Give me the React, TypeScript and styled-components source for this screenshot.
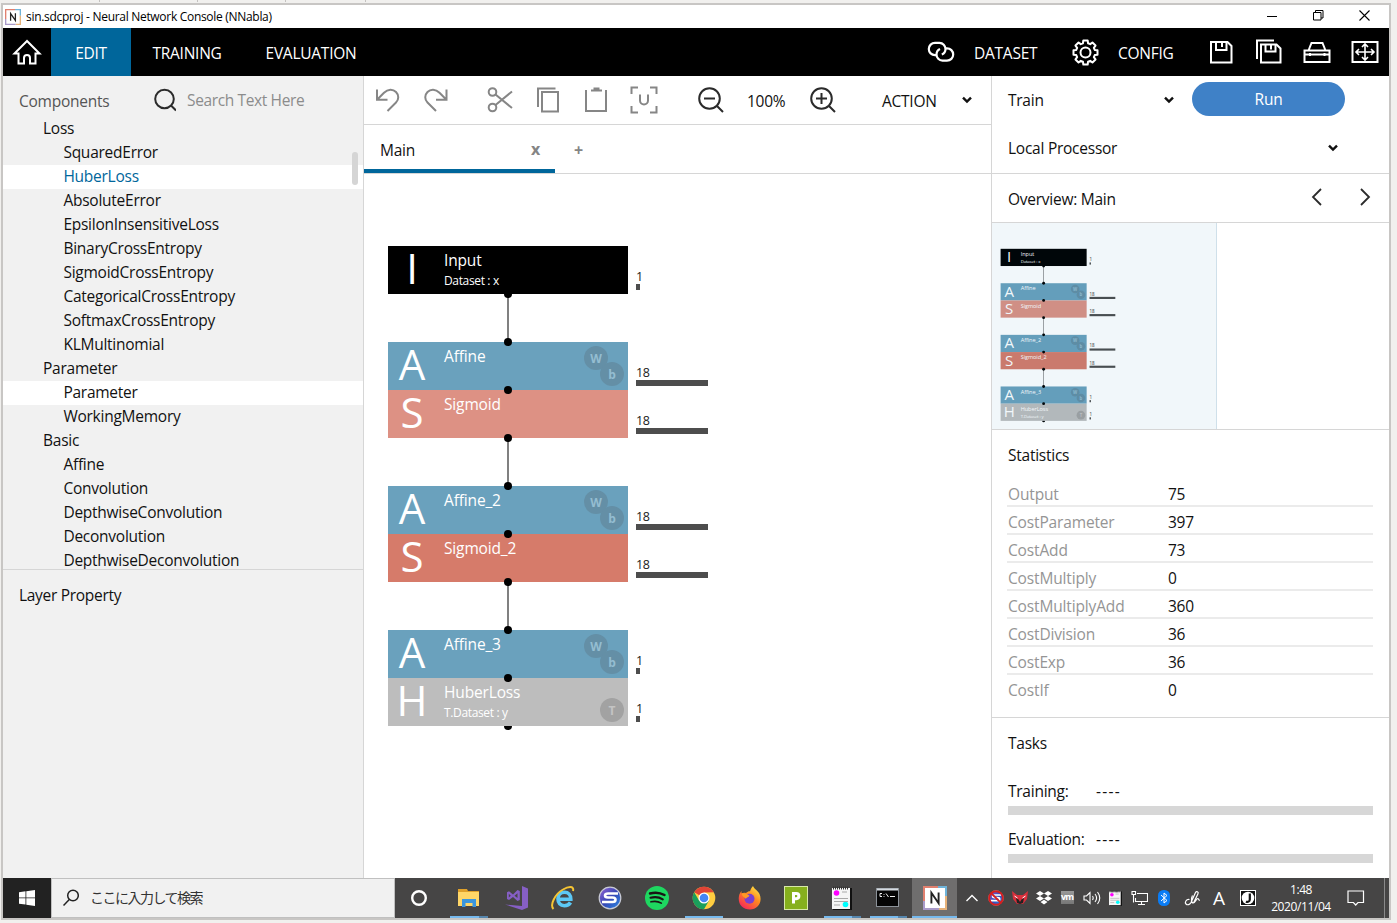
import React from 'react';
import styled, { createGlobalStyle, css } from 'styled-components';

const GlobalStyle = createGlobalStyle`
  * { box-sizing: border-box; }
  html, body { margin: 0; padding: 0; }
  body {
    width: 1397px; height: 923px; overflow: hidden; background: #f1f0ee;
    font-family: "Open Sans", "Noto Sans", "Noto Sans CJK JP", sans-serif;
    font-size: 15.5px; letter-spacing: -0.25px; color: #111;
  }
  svg { display: block; flex: none; }
`;

const line = '#d6d6d6';
const accent = '#00669b';

/* ---------- window frame ---------- */
const Desktop = styled.div`
  width: 1397px; height: 923px; display: flex; flex-direction: column; padding-left: 1px;
`;
const BackStrip = styled.div`
  height: 3px; display: flex; padding-left: 98px; gap: 97px;
`;
const BackTick = styled.span<{ $gap?: number }>`
  width: 1px; height: 2px; background: #c4c2c0; margin-right: ${p => p.$gap ?? 0}px;
`;
const Window = styled.div`
  width: 1390px; height: 917px; border: 2px solid #c8c6c4; background: #fff;
  display: flex; flex-direction: column; overflow: hidden;
`;
const TitleBar = styled.div`
  height: 23px; flex: none; display: flex; align-items: center; padding: 0 19px 0 2px;
  font-size: 12px; letter-spacing: -0.3px; color: #000;
`;
const AppTitle = styled.span` flex: 1; padding-left: 5px; `;
const WinButtons = styled.div` display: flex; gap: 35px; align-items: center; margin-top: -3px; `;

/* ---------- navigation ---------- */
const Nav = styled.nav`
  height: 48px; flex: none; background: #000; color: #fff; display: flex; align-items: center;
  padding-right: 10px;
`;
const HomeButton = styled.div` width: 48px; padding: 0 0 1px 9px; `;
const NavTab = styled.div<{ $w: number; $active?: boolean }>`
  width: ${p => p.$w}px; height: 48px; display: flex; align-items: center; justify-content: center;
  padding-top: 2px; background: ${p => (p.$active ? accent : 'transparent')};
`;
const NavSpacer = styled.div` flex: 1; `;
const NavLabel = styled.span<{ $w: number }>` width: ${p => p.$w}px; padding: 2px 0 0 19px; `;
const NavIcons = styled.div` display: flex; align-items: center; gap: 20px; padding-bottom: 1px; `;

/* ---------- body ---------- */
const Body = styled.div` height: 802px; flex: none; display: flex; `;
const Left = styled.aside`
  width: 361px; background: #f1f1f1; border-right: 1px solid ${line};
  display: flex; flex-direction: column;
`;
const LeftHead = styled.div`
  height: 41px; flex: none; display: flex; align-items: center; padding: 7px 0 0 16px; color: #555;
`;
const HeadTitle = styled.span` width: 135px; padding-top: 2px; `;
const Placeholder = styled.span` padding-left: 11px; color: #8c8c8c; letter-spacing: -0.37px; `;
const ListArea = styled.div`
  height: 453px; flex: none; overflow: hidden; border-bottom: 1px solid ${line}; position: relative;
`;
const Item = styled.div<{ $group?: boolean; $lit?: boolean; $selected?: boolean }>`
  height: 24px; line-height: 22px; padding-left: ${p => (p.$group ? 40 : 60.4)}px;
  background: ${p => (p.$lit ? '#fff' : 'transparent')};
  color: ${p => (p.$selected ? accent : '#111')};
`;
const ScrollThumb = styled.div`
  position: absolute; right: 5px; top: 35px; width: 6px; height: 33px; border-radius: 3px; background: #d5d5d5;
`;
const PropertyHead = styled.div` padding: 14px 16px; line-height: 22px; letter-spacing: -0.3px; `;

const Center = styled.main` width: 627px; display: flex; flex-direction: column; `;
const Toolbar = styled.div`
  height: 49px; flex: none; border-bottom: 1px solid ${line}; display: flex; align-items: center;
  padding-left: 11px;
`;
const Slot = styled.div<{ $w: number; $top?: number }>`
  width: ${p => p.$w}px; flex: none; padding-top: ${p => p.$top ?? 0}px;
`;
const Tabs = styled.div`
  height: 49px; flex: none; border-bottom: 1px solid ${line}; display: flex; align-items: center;
`;
const Tab = styled.div`
  width: 191px; height: 48px; border-bottom: 4px solid ${accent};
  display: flex; align-items: center; justify-content: space-between; padding: 5px 15px 0 16px;
`;
const TabMark = styled.span` font-weight: 700; font-size: 16px; color: #858585; line-height: 20px; margin-top: -2px; `;
const AddTab = styled.span` font-weight: 700; font-size: 16px; color: #858585; padding: 1px 0 0 19px; `;

const Right = styled.aside`
  width: 398px; border-left: 1px solid ${line}; display: flex; flex-direction: column;
`;
const RunRow = styled.div` height: 48px; flex: none; display: flex; align-items: center; padding-left: 16px; `;
const SelectText = styled.span<{ $w: number }>` width: ${p => p.$w}px; `;
const RunButton = styled.div`
  width: 153px; height: 34px; border-radius: 17px; background: #3f81c7; color: #fff; margin: -2px 0 0 17px;
  display: flex; align-items: center; justify-content: center;
`;
const ProcRow = styled.div`
  height: 50px; flex: none; display: flex; align-items: center; padding: 0 0 1px 16px;
  border-bottom: 1px solid ${line};
`;
const OverHead = styled.div`
  height: 49px; flex: none; display: flex; align-items: center; padding: 2px 18px 0 16px;
  border-bottom: 1px solid ${line};
`;
const Arrows = styled.div` display: flex; gap: 38px; margin-left: auto; padding-bottom: 4px; `;
const OverArea = styled.div` height: 207px; flex: none; border-bottom: 1px solid ${line}; `;
const Viewport = styled.div`
  width: 225px; height: 206px; overflow: hidden; position: relative; border-right: 1px solid #cfe0ea;
  &::after { content: ''; position: absolute; inset: 0; background: rgba(0, 102, 155, 0.055); }
`;
const MiniScale = styled.div` width: 627px; height: 576px; transform: scale(0.3585); transform-origin: 0 0; `;
const Section = styled.section<{ $h: number; $rule?: boolean }>`
  height: ${p => p.$h}px; flex: none; padding: 13px 16px 0;
  ${p => p.$rule && css`border-bottom: 1px solid ${line};`}
`;
const SectionTitle = styled.div<{ $gap: number }>` line-height: 24px; margin-bottom: ${p => p.$gap}px; `;
const StatRow = styled.div`
  height: 28px; display: flex; line-height: 28px; padding-top: 1px; border-bottom: 2px solid #ebebeb;
  margin-left: -1px; padding-left: 1px;
  &:last-child { border-bottom: 0; }
`;
const StatName = styled.span` width: 160px; color: #959595; letter-spacing: -0.15px; `;
const Task = styled.div` height: 48px; line-height: 24px; `;
const TaskLine = styled.div` display: flex; height: 27px; `;
const TaskName = styled.span` width: 88px; `;
const Dashes = styled.span` letter-spacing: 1.3px; `;
const Progress = styled.div` height: 9px; background: #d7d7d7; `;

/* ---------- network graph ---------- */
const Canvas = styled.div` position: relative; height: 704px; color: #fff; `;
const Block = styled.div<{ $y: number; $color: string }>`
  position: absolute; left: 24px; top: ${p => p.$y}px; width: 240px; height: 48px;
  background: ${p => p.$color}; display: flex;
`;
const Initial = styled.div`
  width: 48px; text-align: center; font-size: 42px; line-height: 44px; letter-spacing: 0;
`;
const BlockText = styled.div` padding: 2px 0 0 8px; line-height: 24px; letter-spacing: -0.15px; `;
const BlockNote = styled.div` font-size: 12px; line-height: 18px; letter-spacing: -0.35px; `;
const Pin = styled.div<{ $x: number; $y: number; $grey?: boolean }>`
  position: absolute; left: ${p => p.$x}px; top: ${p => p.$y}px; width: 24px; height: 24px; border-radius: 50%;
  background: ${p => (p.$grey ? '#a2a2a2' : '#648fa6')}; color: ${p => (p.$grey ? '#c4c4c4' : '#94bdd1')};
  font-size: 12px; font-weight: 700; letter-spacing: 0; text-align: center; line-height: 25px;
`;
const Wire = styled.div<{ $y: number }>`
  position: absolute; left: 143px; top: ${p => p.$y}px; width: 2px; height: 48px; background: #808080;
`;
const Dot = styled.div<{ $y: number }>`
  position: absolute; left: 140px; top: ${p => p.$y - 4}px; width: 8px; height: 8px; border-radius: 50%; background: #000;
`;
const Size = styled.div<{ $y: number }>`
  position: absolute; left: 272px; top: ${p => p.$y + 22}px; color: #1a1a1a;
  font-size: 12.5px; letter-spacing: -0.4px;
`;
const SizeText = styled.div` height: 16px; line-height: 18px; `;
const SizeBar = styled.div<{ $w: number }>` width: ${p => p.$w}px; height: 6px; background: #4d4d4d; `;

type Layer = { y: number; c: string; ch: string; name: string; note?: string; n: number; pins?: 'wb' | 't' };
const blue = '#6aa1bd';
const layers: Layer[] = [
  { y: 72, c: '#000', ch: 'I', name: 'Input', note: 'Dataset : x', n: 1 },
  { y: 168, c: blue, ch: 'A', name: 'Affine', n: 18, pins: 'wb' },
  { y: 216, c: '#dd9184', ch: 'S', name: 'Sigmoid', n: 18 },
  { y: 312, c: blue, ch: 'A', name: 'Affine_2', n: 18, pins: 'wb' },
  { y: 360, c: '#d67b6a', ch: 'S', name: 'Sigmoid_2', n: 18 },
  { y: 456, c: blue, ch: 'A', name: 'Affine_3', n: 1, pins: 'wb' },
  { y: 504, c: '#bdbdbd', ch: 'H', name: 'HuberLoss', note: 'T.Dataset : y', n: 1, pins: 't' },
];

const Graph = () => (
  <Canvas>
    {[120, 264, 408].map(y => <Wire key={y} $y={y} />)}
    <Dot $y={552} />
    {layers.map(l => (
      <React.Fragment key={l.name}>
        <Block $y={l.y} $color={l.c}>
          <Initial>{l.ch}</Initial>
          <BlockText>
            {l.name}
            {l.note && <BlockNote>{l.note}</BlockNote>}
          </BlockText>
          {l.pins === 'wb' && <><Pin $x={196} $y={4}>W</Pin><Pin $x={212} $y={20}>b</Pin></>}
          {l.pins === 't' && <Pin $x={212} $y={20} $grey>T</Pin>}
        </Block>
        <Size $y={l.y}><SizeText>{l.n}</SizeText><SizeBar $w={l.n * 4} /></Size>
      </React.Fragment>
    ))}
    {[120, 168, 216, 264, 312, 360, 408, 456, 504].map(y => <Dot key={y} $y={y} />)}
  </Canvas>
);

/* ---------- icons ---------- */
const Svg = ({ w, h, s = 'currentColor', sw = 2, children }: { w: number; h: number; s?: string; sw?: number; children: React.ReactNode }) => (
  <svg width={w} height={h} viewBox={`0 0 ${w} ${h}`} fill="none" stroke={s} strokeWidth={sw}>{children}</svg>
);
const gearPath = (() => {
  const pts: string[] = [];
  for (let i = 0; i < 8; i++) {
    const a = (i * Math.PI) / 4;
    [[-0.27, 9.6], [-0.18, 12.2], [0.18, 12.2], [0.27, 9.6]].forEach(([d, r]) => {
      pts.push(`${(13.5 + r * Math.sin(a + d)).toFixed(2)} ${(13.5 - r * Math.cos(a + d)).toFixed(2)}`);
    });
  }
  return `M${pts.join('L')}Z`;
})();
const Caret = () => <Svg w={12} h={8} s="#111" sw={2.4}><path d="M2 1.6l4 4 4-4" /></Svg>;
const grey = '#868686';
const dark = '#2b2b2b';

const NLogo = ({ size }: { size: number }) => (
  <svg width={size} height={size} viewBox="0 0 24 24">
    <rect width="24" height="24" fill="#fff" />
    <path d="M1 15V1H15" fill="none" stroke="#e0806f" strokeWidth="2" />
    <path d="M15 1H23V10" fill="none" stroke="#6fb3d8" strokeWidth="2" />
    <path d="M23 10V23H16" fill="none" stroke="#e6b27a" strokeWidth="2" />
    <path d="M16 23H1V15" fill="none" stroke="#a99ac9" strokeWidth="2" />
    <path d="M8.4 17.5V6.8L15.6 17.2V6.5" fill="none" stroke="#222" strokeWidth="1.9" />
  </svg>
);

/* ---------- taskbar ---------- */
const Taskbar = styled.footer` height: 40px; flex: none; background: #464545; display: flex; color: #fff; `;
const Start = styled.div` width: 48px; background: #222; display: flex; align-items: center; justify-content: center; `;
const SearchBox = styled.div`
  width: 344px; background: #f1f1f1; border: 1px solid #c0c0c0; display: flex; align-items: center;
  padding: 0 0 0 11px; gap: 11px; color: #333; font: 14px "Noto Sans CJK JP", sans-serif; letter-spacing: 0;
`;
const SearchText = styled.span` letter-spacing: -1.5px; margin-top: -2px; `;
const TaskSlot = styled.div<{ $w: number; $on?: boolean; $line?: number; $split?: boolean; $pad?: number }>`
  width: ${p => p.$w}px; flex: none; display: flex; align-items: center; justify-content: center; position: relative;
  padding-right: ${p => p.$pad ?? 0}px;
  background: ${p => (p.$on ? '#6f6e6e' : 'transparent')};
  ${p => p.$line && css`
    &::after {
      content: ''; position: absolute; bottom: 0; left: calc(50% - ${p.$line / 2}px); width: ${p.$line}px; height: 2px;
      background: ${p.$split ? 'linear-gradient(90deg, #76b9ed 0 77%, #5686ad 77%)' : '#76b9ed'};
    }`}
`;
const Tray = styled.div` display: flex; margin-left: 3px; flex: 1; `;
const Clock = styled.div`
  width: 70px; font-size: 12px; line-height: 17px; padding-top: 3px; text-align: center; letter-spacing: -0.4px;
`;
const ShowDesktop = styled.div` width: 5px; margin-left: auto; border-left: 1px solid #8a8a8a; `;

const Explorer = () => (
  <svg width="24" height="24" viewBox="0 0 24 24">
    <path d="M1 3h9l1 2h11v15H1z" fill="#e0a12a" /><path d="M1 6h21v14H1z" fill="#ffd667" />
    <path d="M5 20v-7h14v8h-3.5v-4h-7v4H5z" fill="#3b96dc" />
  </svg>
);
const VisualStudio = () => (
  <svg width="26" height="26" viewBox="0 0 26 26">
    <path d="M18 1l6 2.4v19L18 25 1 19.5l17 1.5z" fill="#865fc5" />
    <path d="M3 7.2l2-1 4 3.3 4.5-4.5 2.3 1v9l-2.3 1L9 12l-4 3-2-1zM4.8 8.8v3.8l2-1.9zM10.5 10.7l3 2.4V8.3z" fill="#865fc5" fillRule="evenodd" />
  </svg>
);
const InternetExplorer = () => (
  <svg width="24" height="24" viewBox="0 0 24 24" fill="none">
    <path d="M19.500 16.500c-1.300 2.300-3.500 3.200-6.200 3.200-4 0-6.300-2.700-6.300-6.600 0-4 2.600-6.800 6.500-6.800s6.300 2.700 6.300 6.900H8.500" stroke="#5cc8f5" strokeWidth="3.600" />
    <path d="M2.500 23C-1.500 19 4 8 12 3.500 17 .5 23.500-.5 22 5" stroke="#f5c433" strokeWidth="2" />
  </svg>
);
const SIcon = ({ size, no }: { size: number; no?: boolean }) => (
  <svg width={size} height={size} viewBox="0 0 24 24" fill="none">
    <defs><linearGradient id="orb" x1="0" y1="0" x2="1" y2="1"><stop offset="0" stopColor="#9a66d6" /><stop offset=".5" stopColor="#3646b4" /><stop offset="1" stopColor="#2b8ee8" /></linearGradient></defs>
    <circle cx="12" cy="12" r="10.800" fill="url(#orb)" stroke="#c9cbd6" strokeWidth="1.200" />
    <path d="M20 7.500H10c-4 0-4 4 0 4h4.500c4 0 4 4.500 0 4.500H4" stroke="#fff" strokeWidth="2.600" />
    {no && <><circle cx="12" cy="12" r="10.300" stroke="#d81e1e" strokeWidth="3" /><path d="M5 5l14 14" stroke="#d81e1e" strokeWidth="3" /></>}
  </svg>
);
const Spotify = () => (
  <svg width="24" height="24" viewBox="0 0 24 24" fill="none" stroke="#191414" strokeLinecap="round">
    <circle cx="12" cy="12" r="12" fill="#1ed760" stroke="none" />
    <path d="M5 7.500c5-1.500 10-1 14.500 1.500" strokeWidth="2.500" /><path d="M5.500 11.800c4.500-1.300 8.500-.8 12.300 1.500" strokeWidth="2.100" /><path d="M6 15.800c3.800-1 7.200-.6 10.300 1.300" strokeWidth="1.700" />
  </svg>
);
const Chrome = () => (
  <svg width="24" height="24" viewBox="0 0 24 24">
    <circle cx="12" cy="12" r="11.300" fill="#ffcd40" />
    <path d="M12 12L2.200 6.350A11.300 11.300 0 0 1 21.800 6.350L12 6.500z" fill="#e04436" />
    <path d="M2.200 6.350A11.300 11.300 0 0 0 12 23.300L16.900 14.800 12 12 7 14.600z" fill="#1a9f5c" />
    <circle cx="12" cy="12" r="5.500" fill="#fff" /><circle cx="12" cy="12" r="4.300" fill="#4486f4" />
  </svg>
);
const Firefox = () => (
  <svg width="24" height="24" viewBox="0 0 24 24">
    <defs><linearGradient id="fx" x1=".9" y1="0" x2=".2" y2="1"><stop offset="0" stopColor="#fff04a" /><stop offset=".45" stopColor="#ff8a1f" /><stop offset="1" stopColor="#f5215e" /></linearGradient></defs>
    <path d="M15 0c1 3 5 4.500 6.500 8 3.500 8-2 15.500-9.500 15.500S-.5 18 1 10c.3-2 1.500-4 2.500-5v2.500C5 6.500 6.500 6.500 8 7c1.500-1.500 3-2 4-1.800C12.500 3.500 13.500 1.500 15 0z" fill="url(#fx)" />
    <circle cx="11.500" cy="12.800" r="5" fill="#7a3fd0" />
    <path d="M3.500 7.500c3-.5 5 0 8 2.200-1 1.800-3 1.500-3.800 3C6 11 4 10 3.500 7.500z" fill="#ff9a24" />
  </svg>
);
const PIcon = () => (
  <svg width="24" height="24" viewBox="0 0 24 24">
    <rect width="24" height="24" fill="#d8e8a8" /><rect x="1" y="1" width="22" height="22" fill="#86b01d" />
    <path d="M9.500 17.500V7.500h2.800a2.600 2.600 0 0 1 0 5.200H9.500" fill="none" stroke="#fff" strokeWidth="3" />
  </svg>
);
const Note = ({ w, h }: { w: number; h: number }) => (
  <svg width={w} height={h} viewBox="0 0 20 24">
    <rect x="1" y="2" width="19" height="22" fill="#111" /><rect x="0" y="2" width="18" height="21" fill="#f5f5f5" />
    <path d="M1 2h16" stroke="#333" strokeWidth="3" strokeDasharray="1 1" />
    <circle cx="4.500" cy="7" r="2.800" fill="#f0f" /><circle cx="13.500" cy="18.500" r="2.800" fill="#0ff" />
    <path d="M2 12.500h14M2 15.500h14M2 19h6M10 6h5" stroke="#a9a9a9" />
  </svg>
);
const Cmd = () => (
  <svg width="24" height="22" viewBox="0 0 24 22">
    <rect x=".5" y="1.500" width="22" height="18" fill="#050505" stroke="#8c9299" /><path d="M1 2.500h21" stroke="#d5dae0" strokeWidth="2" />
    <path d="M6 6.500H4v3h2M8 7v.8M8 9v.8M10 6.500l2.500 3.500M14 9.500h5" stroke="#eee" fill="none" />
  </svg>
);
const Fox = () => (
  <svg width="16" height="14" viewBox="0 0 16 14">
    <path d="M0 0l5 4h6l5-4-1 8-4 5H5L1 8z" fill="#d8303c" /><path d="M4 7l2.500 1.500L8 11l1.500-2.500L12 7l-1 5-3 1-3-1z" fill="#222" /><path d="M2.500 5l3 2M13.500 5l-3 2" stroke="#fff" />
  </svg>
);
const Dropbox = () => (
  <svg width="16" height="14" viewBox="0 0 16 14" fill="#fff">
    <path d="M4 0l4 2.500L4 5 0 2.500zM12 0l4 2.500L12 5 8 2.500zM4 5l4 2.500L4 10 0 7.500zM12 5l4 2.500-4 2.500-4-2.500zM4.500 11L8 8.700l3.500 2.300L8 13.500z" />
  </svg>
);
const VmBox = styled.div`
  width: 13px; height: 13px; background: linear-gradient(#999, #777); color: #fff; font-size: 9px; line-height: 11px;
  font-weight: 700; letter-spacing: -1px; text-align: center; margin-top: -2px;
`;
const TrayLetter = styled.span` font-size: 19px; letter-spacing: 0; `;

const items: [string, boolean?][] = [
  ['Loss', true], ['SquaredError'], ['HuberLoss'], ['AbsoluteError'], ['EpsilonInsensitiveLoss'],
  ['BinaryCrossEntropy'], ['SigmoidCrossEntropy'], ['CategoricalCrossEntropy'], ['SoftmaxCrossEntropy'],
  ['KLMultinomial'], ['Parameter', true], ['Parameter'], ['WorkingMemory'], ['Basic', true], ['Affine'],
  ['Convolution'], ['DepthwiseConvolution'], ['Deconvolution'], ['DepthwiseDeconvolution'],
];
const stats: [string, number][] = [
  ['Output', 75], ['CostParameter', 397], ['CostAdd', 73], ['CostMultiply', 0],
  ['CostMultiplyAdd', 360], ['CostDivision', 36], ['CostExp', 36], ['CostIf', 0],
];

export default function App() {
  return (
    <Desktop>
      <GlobalStyle />
      <BackStrip><BackTick /><BackTick $gap={-10} /><BackTick $gap={-18} /><BackTick /></BackStrip>
      <Window>
        <TitleBar>
          <NLogo size={16} />
          <AppTitle>sin.sdcproj - Neural Network Console (NNabla)</AppTitle>
          <WinButtons>
            <Svg w={11} h={11} s="#000" sw={1}><path d="M0 6.500h10" /></Svg>
            <Svg w={11} h={11} s="#000" sw={1}><path d="M.5 2.500h7.500v7.500H.5zM2.500 2.500V.5h7.500V8H8" /></Svg>
            <Svg w={11} h={11} s="#000" sw={1.1}><path d="M.5.5l10 10M10.500.5l-10 10" /></Svg>
          </WinButtons>
        </TitleBar>

        <Nav>
          <HomeButton>
            <Svg w={30} h={26}><path d="M15 2L2.500 14.500h4V24.500h5.500V19a3 3 0 0 1 6 0v5.500h5.500v-10h4z" /></Svg>
          </HomeButton>
          <NavTab $w={80} $active>EDIT</NavTab>
          <NavTab $w={112}>TRAINING</NavTab>
          <NavTab $w={136}>EVALUATION</NavTab>
          <NavSpacer />
          <Svg w={28} h={22} sw={2.2}>
            <path d="M9.500 14.200H8A6.200 6.200 0 0 1 8 1.800h4.500A6.200 6.200 0 0 1 18.500 8c0 2.600-1.400 4.600-3.700 5.600" />
            <path d="M19 7.300h1a6.200 6.200 0 0 1 0 12.400h-4.500A6.200 6.200 0 0 1 9.500 13.500c0-2.600 1.200-4.600 3.500-5.600" />
          </Svg>
          <NavLabel $w={117}>DATASET</NavLabel>
          <Svg w={27} h={27}><path d={gearPath} strokeLinejoin="round" /><circle cx="13.500" cy="13.500" r="5" /></Svg>
          <NavLabel $w={108}>CONFIG</NavLabel>
          <NavIcons>
            <Svg w={28} h={26}><path d="M4 3h16.500l4 4v16.500H4z" /><path d="M9 3v8h10.500V3M15 3v5" /></Svg>
            <Svg w={28} h={26}><path d="M2 20V1.500h17" /><path d="M6 5.500h15.500l4 4v14H6z" /><path d="M10.500 5.500v7h10V6M16 6v4.500" /></Svg>
            <Svg w={28} h={26}><path d="M1.500 11.500h25v11.500h-25zM5.500 11.500l3-7.500h11l3 7.500M1.500 15.500h25M7 14v3M21.500 14v3" /></Svg>
            <Svg w={28} h={26}><path d="M1.500 3h25v20h-25z" /><path d="M14 5.500v15M5 13h18M11 8l3-3 3 3M11 18l3 3 3-3M8 10l-3 3 3 3M20 10l3 3-3 3" strokeWidth={1.6} /></Svg>
          </NavIcons>
        </Nav>

        <Body>
          <Left>
            <LeftHead>
              <HeadTitle>Components</HeadTitle>
              <Svg w={22} h={24} s={dark} sw={2}><circle cx="10.500" cy="11" r="9.300" /><path d="M17 17.500l5 5" /></Svg>
              <Placeholder>Search Text Here</Placeholder>
            </LeftHead>
            <ListArea>
              {items.map(([t, g], i) => (
                <Item key={i} $group={g} $lit={i === 2 || i === 11} $selected={i === 2}>{t}</Item>
              ))}
              <ScrollThumb />
            </ListArea>
            <PropertyHead>Layer Property</PropertyHead>
          </Left>

          <Center>
            <Toolbar>
              <Slot $w={48}><Svg w={26} h={26} s={grey}><path d="M2 2.500v10.300h10.500M2.300 12.500L9 5.800c4-4 9-3.800 12-.8s3 7.500 0 10.500l-8.500 8.500" /></Svg></Slot>
              <Slot $w={64}><Svg w={26} h={26} s={grey}><path d="M23.500 2.500v10.300H13M23.200 12.500L16.500 5.800c-4-4-9-3.800-12-.8s-3 7.500 0 10.500L13 24" /></Svg></Slot>
              <Slot $w={49}><Svg w={26} h={26} s={grey}><circle cx="5.500" cy="5" r="3.800" /><circle cx="5.500" cy="20.500" r="3.800" /><path d="M8.500 7.500L25 21M8.500 18L25 4.500" /></Svg></Slot>
              <Slot $w={47}><Svg w={26} h={26} s={grey}><path d="M2 20V1.500h17.500M6 5h16v19.500H6z" /></Svg></Slot>
              <Slot $w={47}><Svg w={26} h={26} s={grey}><path d="M3 3v21h20V3M8 3.500h11M10.500 1.500h6" /></Svg></Slot>
              <Slot $w={68}><Svg w={28} h={28} s={grey}><path d="M1.500 8V1.500H8M20 1.500h6.500V8M26.500 20v6.500H20M8 26.500H1.500V20M10 8.500v6a4 4 0 0 0 8 0v-6" /></Svg></Slot>
              <Slot $w={49}><Svg w={28} h={26} s={dark}><circle cx="11.500" cy="11.500" r="10.300" /><path d="M19 19l6 6M6 11.500h11" /></Svg></Slot>
              <Slot $w={63} $top={2}>100%</Slot>
              <Slot $w={72}><Svg w={28} h={26} s={dark}><circle cx="11.500" cy="11.500" r="10.300" /><path d="M19 19l6 6M6 11.500h11M11.500 6v11" /></Svg></Slot>
              <Slot $w={79} $top={2}>ACTION</Slot>
              <Caret />
            </Toolbar>
            <Tabs>
              <Tab>Main<TabMark>x</TabMark></Tab>
              <AddTab>+</AddTab>
            </Tabs>
            <Graph />
          </Center>

          <Right>
            <RunRow><SelectText $w={155}>Train</SelectText><Caret /><RunButton>Run</RunButton></RunRow>
            <ProcRow><SelectText $w={319}>Local Processor</SelectText><Caret /></ProcRow>
            <OverHead>
              Overview: Main
              <Arrows>
                <Svg w={11} h={18} s={dark} sw={1.8}><path d="M10 1L2 9l8 8" /></Svg>
                <Svg w={11} h={18} s={dark} sw={1.8}><path d="M1 1l8 8-8 8" /></Svg>
              </Arrows>
            </OverHead>
            <OverArea><Viewport><MiniScale><Graph /></MiniScale></Viewport></OverArea>
            <Section $h={288} $rule>
              <SectionTitle $gap={12}>Statistics</SectionTitle>
              <div>{stats.map(([k, v]) => <StatRow key={k}><StatName>{k}</StatName>{v}</StatRow>)}</div>
            </Section>
            <Section $h={160}>
              <SectionTitle $gap={24}>Tasks</SectionTitle>
              {['Training:', 'Evaluation:'].map(t => (
                <Task key={t}><TaskLine><TaskName>{t}</TaskName><Dashes>----</Dashes></TaskLine><Progress /></Task>
              ))}
            </Section>
          </Right>
        </Body>

        <Taskbar>
          <Start>
            <svg width="16" height="16" viewBox="0 0 16 16" fill="#fff"><path d="M0 2.200l6.500-.9v6.200H0zM7.300 1.200L16 0v7.500H7.300zM0 8.300h6.500v6.300L0 13.700zM7.300 8.300H16V16l-8.700-1.200z" /></svg>
          </Start>
          <SearchBox>
            <Svg w={16} h={18} s="#222" sw={1.5}><circle cx="10" cy="6.500" r="5.300" /><path d="M6.300 10.500L.5 16.500" /></Svg>
            <SearchText>ここに入力して検索</SearchText>
          </SearchBox>
          <TaskSlot $w={50} $pad={2}><Svg w={18} h={18} s="#fff" sw={2.4}><circle cx="9" cy="9" r="6.800" /></Svg></TaskSlot>
          <TaskSlot $w={48} $line={38} $split><Explorer /></TaskSlot>
          <TaskSlot $w={47}><VisualStudio /></TaskSlot>
          <TaskSlot $w={47} $pad={2}><InternetExplorer /></TaskSlot>
          <TaskSlot $w={46}><SIcon size={24} /></TaskSlot>
          <TaskSlot $w={47}><Spotify /></TaskSlot>
          <TaskSlot $w={47} $line={38}><Chrome /></TaskSlot>
          <TaskSlot $w={46}><Firefox /></TaskSlot>
          <TaskSlot $w={46}><PIcon /></TaskSlot>
          <TaskSlot $w={46} $line={37} $split><Note w={20} h={24} /></TaskSlot>
          <TaskSlot $w={47} $line={37} $split $pad={2}><Cmd /></TaskSlot>
          <TaskSlot $w={45} $on $line={45}><NLogo size={24} /></TaskSlot>
          <Tray>
            <TaskSlot $w={24}><Svg w={14} h={10} s="#fff" sw={1.4}><path d="M1.500 8l5.500-5.500L12.500 8" /></Svg></TaskSlot>
            <TaskSlot $w={24}><SIcon size={16} no /></TaskSlot>
            <TaskSlot $w={24}><Fox /></TaskSlot>
            <TaskSlot $w={24}><Dropbox /></TaskSlot>
            <TaskSlot $w={24} $pad={2}><VmBox>vm</VmBox></TaskSlot>
            <TaskSlot $w={24}><Svg w={18} h={14} s="#fff" sw={1.1}><path d="M1 5h2.500L7 1.500v11L3.500 9H1zM9.500 5c1 1.500 1 2.500 0 4M12 3c2 2.500 2 5.500 0 8M14.500 1c3 4 3 8 0 12" /></Svg></TaskSlot>
            <TaskSlot $w={24} $pad={1}><Note w={13} h={16} /></TaskSlot>
            <TaskSlot $w={24} $pad={1}><Svg w={17} h={16} s="#fff" sw={1.1}><path d="M6 3.500h10.500v8H4.500V8M1 1.500h3.500v3H1zM2.500 4.500v8M10.500 11.500v3M7 14.500h7" /></Svg></TaskSlot>
            <TaskSlot $w={24}><svg width="12" height="16" viewBox="0 0 12 16"><rect width="12" height="16" rx="5.500" fill="#0a7cf5" /><path d="M3 5l6 5.500-3 2.500V3l3 2.500L3 11" fill="none" stroke="#fff" /></svg></TaskSlot>
            <TaskSlot $w={32}><Svg w={17} h={17} s="#fff" sw={1.2}><path d="M5.500 9.500C2 9 .5 12.500 2 14s4 .5 5-1.500l4.500-10c1-1.700 3.300-.5 2.500 1.200L9.500 13M8.500 5.500c-1.500 3-1.500 7.500.8 7.500 2 0 3-4.500 4.500-4.500 1 0 .6 2 2 1.800" /></Svg></TaskSlot>
            <TaskSlot $w={22}><TrayLetter>A</TrayLetter></TaskSlot>
            <TaskSlot $w={36}><svg width="16" height="16" viewBox="0 0 16 16"><rect width="16" height="16" fill="#fff" /><rect x="1" y="1" width="14" height="14" fill="#111" /><circle cx="8" cy="8" r="6.300" fill="#fff" /><path d="M9.800 3.500v6c0 2-2 3-3.800 2" fill="none" stroke="#111" strokeWidth="2.200" /></svg></TaskSlot>
            <Clock>1:48<br />2020/11/04</Clock>
            <TaskSlot $w={40}><Svg w={18} h={18} s="#fff" sw={1.2}><path d="M1 2h15.500v11.500H11L8.700 16l-2.300-2.500H1z" /></Svg></TaskSlot>
            <ShowDesktop />
          </Tray>
        </Taskbar>
      </Window>
    </Desktop>
  );
}
